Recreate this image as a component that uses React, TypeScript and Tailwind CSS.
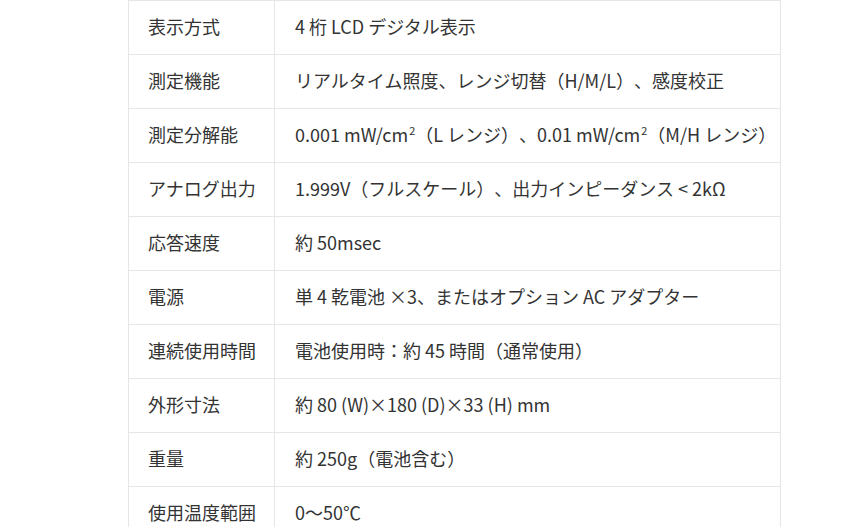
import React from "react";

const Sup = () => <sup className="text-[11px] -top-[7px] ml-[1px]">2</sup>;

const rows: [string, React.ReactNode][] = [
  ["表示方式", "4 桁 LCD デジタル表示"],
  ["測定機能", "リアルタイム照度、レンジ切替（H/M/L）、感度校正"],
  [
    "測定分解能",
    <>
      0.001 mW/cm<Sup />（L レンジ）、0.01 mW/cm<Sup />（M/H レンジ）
    </>,
  ],
  ["アナログ出力", "1.999V（フルスケール）、出力インピーダンス < 2kΩ"],
  ["応答速度", "約 50msec"],
  ["電源", "単 4 乾電池 ×3、またはオプション AC アダプター"],
  ["連続使用時間", "電池使用時：約 45 時間（通常使用）"],
  ["外形寸法", "約 80 (W)×180 (D)×33 (H) mm"],
  ["重量", "約 250g（電池含む）"],
  ["使用温度範囲", "0～50℃"],
];

export default function App() {
  return (
    <div
      className="w-[857px] h-[527px] overflow-hidden bg-white pl-[128px] [text-spacing-trim:space-all]"
      style={{ fontFamily: '"Noto Sans CJK JP", "Noto Sans", sans-serif' }}
    >
      <table className="w-[653px] table-fixed border-collapse text-[18px] text-[#333333]">
        <colgroup>
          <col className="w-[146px]" />
          <col />
        </colgroup>
        <tbody>
          {rows.map(([k, v], i) => (
            <tr key={i}>
              <td className="h-[54px] border border-[#e6e6e6] pl-[19px] pr-2 pt-0 pb-[3px] leading-6 whitespace-nowrap">{k}</td>
              <td className="h-[54px] border border-[#e6e6e6] pl-[20px] pr-2 pt-0 pb-[3px] leading-6 whitespace-nowrap">{v}</td>
            </tr>
          ))}
        </tbody>
      </table>
    </div>
  );
}
